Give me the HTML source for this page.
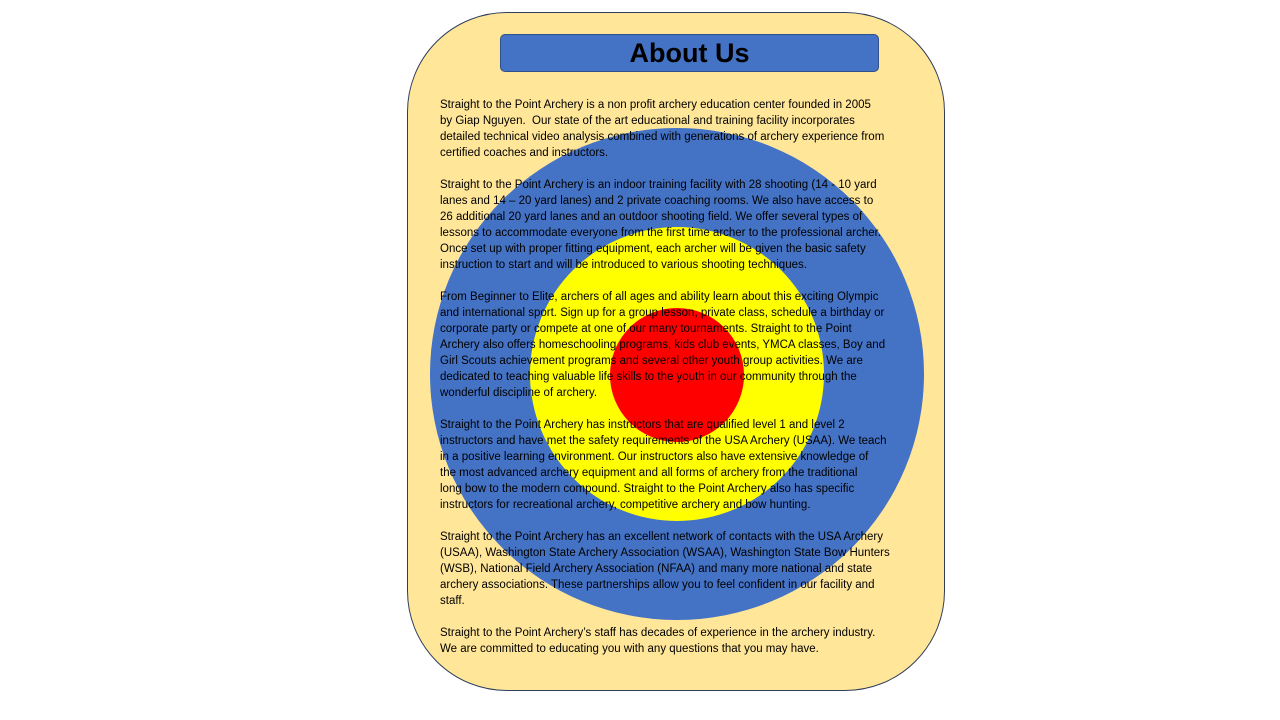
<!DOCTYPE html>
<html><head><meta charset="utf-8"><style>
body{margin:0;width:1280px;height:720px;background:#fff;position:relative;overflow:hidden;font-family:"Liberation Sans",sans-serif}
.card{position:absolute;left:407px;top:12px;width:538px;height:679px;background:#FFE699;border:1px solid #2F3E5C;border-radius:100px;box-sizing:border-box}
.c{position:absolute;border-radius:50%}
.title{position:absolute;left:500px;top:34px;width:379px;height:38px;background:#4472C4;border:1px solid #2F4F8A;border-radius:5px;box-sizing:border-box;text-align:center;font-weight:bold;font-size:27px;line-height:37px;color:#000}
.t{position:absolute;left:440px;font-size:11.5px;line-height:16px;white-space:nowrap;color:#000;letter-spacing:0}
</style></head><body>
<div class="card"></div>
<div class="c" style="left:430px;top:128px;width:494px;height:492px;background:#4472C4"></div>
<div class="c" style="left:530px;top:227px;width:294px;height:294px;background:#FFFF00"></div>
<div class="c" style="left:610px;top:308px;width:134px;height:134px;background:#FF0000"></div>
<div class="title">About Us</div>
<div class="t" style="top:97px">Straight to the Point Archery is a non profit archery education center founded in 2005</div>
<div class="t" style="top:113px">by Giap Nguyen. &nbsp;Our state of the art educational and training facility incorporates</div>
<div class="t" style="top:129px">detailed technical video analysis combined with generations of archery experience from</div>
<div class="t" style="top:145px">certified coaches and instructors.</div>
<div class="t" style="top:177px">Straight to the Point Archery is an indoor training facility with 28 shooting (14 - 10 yard</div>
<div class="t" style="top:193px">lanes and 14 – 20 yard lanes) and 2 private coaching rooms. We also have access to</div>
<div class="t" style="top:209px">26 additional 20 yard lanes and an outdoor shooting field. We offer several types of</div>
<div class="t" style="top:225px">lessons to accommodate everyone from the first time archer to the professional archer.</div>
<div class="t" style="top:241px">Once set up with proper fitting equipment, each archer will be given the basic safety</div>
<div class="t" style="top:257px">instruction to start and will be introduced to various shooting techniques.</div>
<div class="t" style="top:289px">From Beginner to Elite, archers of all ages and ability learn about this exciting Olympic</div>
<div class="t" style="top:305px">and international sport. Sign up for a group lesson, private class, schedule a birthday or</div>
<div class="t" style="top:321px">corporate party or compete at one of our many tournaments. Straight to the Point</div>
<div class="t" style="top:337px">Archery also offers homeschooling programs, kids club events, YMCA classes, Boy and</div>
<div class="t" style="top:353px">Girl Scouts achievement programs and several other youth group activities. We are</div>
<div class="t" style="top:369px">dedicated to teaching valuable life skills to the youth in our community through the</div>
<div class="t" style="top:385px">wonderful discipline of archery.</div>
<div class="t" style="top:417px">Straight to the Point Archery has instructors that are qualified level 1 and level 2</div>
<div class="t" style="top:433px">instructors and have met the safety requirements of the USA Archery (USAA). We teach</div>
<div class="t" style="top:449px">in a positive learning environment. Our instructors also have extensive knowledge of</div>
<div class="t" style="top:465px">the most advanced archery equipment and all forms of archery from the traditional</div>
<div class="t" style="top:481px">long bow to the modern compound. Straight to the Point Archery also has specific</div>
<div class="t" style="top:497px">instructors for recreational archery, competitive archery and bow hunting.</div>
<div class="t" style="top:529px">Straight to the Point Archery has an excellent network of contacts with the USA Archery</div>
<div class="t" style="top:545px">(USAA), Washington State Archery Association (WSAA), Washington State Bow Hunters</div>
<div class="t" style="top:561px">(WSB), National Field Archery Association (NFAA) and many more national and state</div>
<div class="t" style="top:577px">archery associations. These partnerships allow you to feel confident in our facility and</div>
<div class="t" style="top:593px">staff.</div>
<div class="t" style="top:625px">Straight to the Point Archery’s staff has decades of experience in the archery industry.</div>
<div class="t" style="top:641px">We are committed to educating you with any questions that you may have.</div>
</body></html>
